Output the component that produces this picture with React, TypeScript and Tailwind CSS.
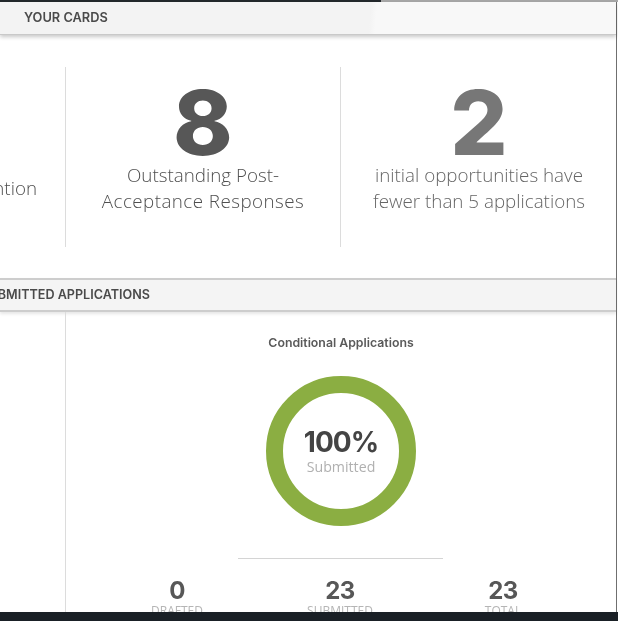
export default function App() {
  const bodyFont = "font-['Open_Sans','Noto_Sans',sans-serif]";
  const headFont = "font-['Inter','Liberation_Sans',sans-serif]";
  return (
    <div className={`relative h-[621px] w-[618px] overflow-hidden bg-white flex flex-col blur-[0.3px] ${bodyFont}`}>
      <div className="flex h-[2px] shrink-0">
        <div className="w-[381px] bg-[#23282c]" />
        <div className="flex-1 bg-[#a8a8a8]" />
      </div>
      <div className="flex-1 flex flex-col min-h-0 mr-[1px] border-r-[1px] border-[#6f6f6f]">
        <div className="h-[33px] shrink-0 bg-[linear-gradient(95deg,#f3f3f3_60%,#f8f8f8_61%)] border-b border-[#c9c9c9] shadow-[0_2px_4px_rgba(0,0,0,0.22)] flex items-center pl-[24px]">
          <span className={`text-[12.8px] font-semibold text-[#4a4a4a] ${headFont}`}>YOUR CARDS</span>
        </div>
        <div className="h-[243px] shrink-0 pt-[32px]">
          <div className="flex h-[180px] ml-[-209px]">
            <div className="w-[275px] shrink-0 border-r border-[#dcdcdc] flex items-start justify-end pt-[108px] pr-[28px]">
              <div className="whitespace-nowrap text-[18.8px] leading-[26px] font-light text-[#4f4f4f]">Needs attention</div>
            </div>
            <div className="w-[275px] shrink-0 border-r border-[#dcdcdc] flex flex-col items-center">
              <div className={`h-[95px] flex items-start text-[90px] leading-[112px] font-extrabold text-[#575757] ${headFont}`}>8</div>
              <div className="text-[18.8px] leading-[26px] font-light text-[#4f4f4f] text-center whitespace-nowrap">Outstanding Post-<br /><span className="tracking-[0.45px]">Acceptance Responses</span></div>
            </div>
            <div className="w-[276px] shrink-0 flex flex-col items-center">
              <div className={`h-[95px] flex items-start text-[90px] leading-[112px] font-extrabold text-[#777777] ${headFont}`}>2</div>
              <div className="text-[18.8px] leading-[26px] font-light text-[#666666] text-center whitespace-nowrap">initial opportunities have<br />fewer than 5 applications</div>
            </div>
          </div>
        </div>
        <div className="h-[34px] shrink-0 bg-[#f4f4f4] border-y-2 border-[#cdcdcd] shadow-[0_2px_3px_rgba(0,0,0,0.1)] flex items-center">
          <div className="w-[150px] overflow-hidden flex justify-end">
            <span className={`whitespace-nowrap text-[12.6px] font-semibold text-[#4a4a4a] ${headFont}`}>SUBMITTED APPLICATIONS</span>
          </div>
        </div>
        <div className="flex-1 min-h-0 flex overflow-hidden">
          <div className="w-[66px] shrink-0 border-r border-[#dcdcdc]" />
          <div className="w-[550px] shrink-0 flex flex-col items-center">
            <div className={`mt-[23px] h-[15px] leading-[15px] text-[12.3px] font-semibold text-[#5a5a5a] ${headFont}`}>Conditional Applications</div>
            <div className="relative mt-[26px] h-[150px] w-[150px] shrink-0 rounded-full border-[17px] border-[#8bae42] flex flex-col items-center justify-center">
              <div className={`text-[28px] leading-[32px] font-bold text-[#444444] tracking-[-1px] ${headFont}`}>100%</div>
              <div className="text-[14.2px] leading-[18px] text-[#b0b0b0]">Submitted</div>
            </div>
            <div className="mt-[32px] mr-[2px] h-px w-[205px] shrink-0 bg-[#d4d4d4]" />
            <div className="mt-[19px] mr-[2px] grid grid-cols-3 w-[489px] shrink-0 text-center">
              {[["0", "DRAFTED"], ["23", "SUBMITTED"], ["23", "TOTAL"]].map(([n, l]) => (
                <div key={l} className="flex flex-col items-center">
                  <div className={`text-[24px] leading-[26px] font-bold text-[#575757] tracking-[-0.5px] ${headFont}`}>{n}</div>
                  <div className="text-[12px] leading-[14px] text-[#b5b5b5]">{l}</div>
                </div>
              ))}
            </div>
          </div>
        </div>
      </div>
      <div className="h-[9px] shrink-0 bg-[#1a2026]" />
    </div>
  );
}
